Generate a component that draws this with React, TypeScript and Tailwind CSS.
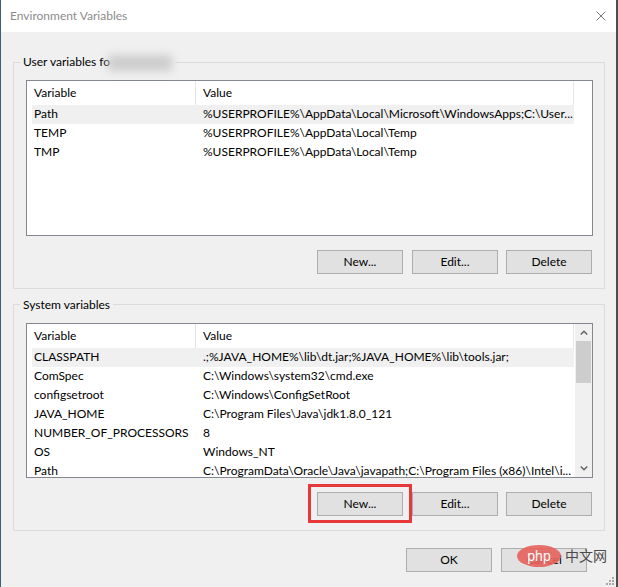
import React from "react";

type Row = [string, string];

const userVars: Row[] = [
  ["Path", "%USERPROFILE%\\AppData\\Local\\Microsoft\\WindowsApps;C:\\User..."],
  ["TEMP", "%USERPROFILE%\\AppData\\Local\\Temp"],
  ["TMP", "%USERPROFILE%\\AppData\\Local\\Temp"],
];

const systemVars: Row[] = [
  ["CLASSPATH", ".;%JAVA_HOME%\\lib\\dt.jar;%JAVA_HOME%\\lib\\tools.jar;"],
  ["ComSpec", "C:\\Windows\\system32\\cmd.exe"],
  ["configsetroot", "C:\\Windows\\ConfigSetRoot"],
  ["JAVA_HOME", "C:\\Program Files\\Java\\jdk1.8.0_121"],
  ["NUMBER_OF_PROCESSORS", "8"],
  ["OS", "Windows_NT"],
  ["Path", "C:\\ProgramData\\Oracle\\Java\\javapath;C:\\Program Files (x86)\\Intel\\i..."],
];

const Button: React.FC<{ label: string; className?: string }> = ({ label, className = "" }) => (
  <button
    className={`flex h-[24px] w-[86px] items-center justify-center border border-[#adadad] bg-[#e1e1e1] text-black ${className}`}
  >
    {label}
  </button>
);

const Chevron: React.FC<{ down?: boolean }> = ({ down }) => (
  <svg width="8" height="5" viewBox="0 0 8 5" className={down ? "rotate-180" : ""}>
    <path d="M0.8 4.4 L4 1.2 L7.2 4.4" fill="none" stroke="#606060" strokeWidth="1.4" />
  </svg>
);

const Scrollbar: React.FC = () => (
  <div className="flex h-full w-[17px] flex-col bg-[#f0f0f0]">
    <div className="flex h-[17px] items-center justify-center">
      <Chevron />
    </div>
    <div className="mx-px h-[42px] bg-[#cdcdcd]" />
    <div className="flex-1" />
    <div className="flex h-[17px] items-center justify-center">
      <Chevron down />
    </div>
  </div>
);

const VarList: React.FC<{ rows: Row[]; className: string; scroll?: boolean }> = ({
  rows,
  className,
  scroll,
}) => (
  <div className={`flex overflow-hidden border border-[#828790] bg-white ${className}`}>
    <div className="flex min-w-0 flex-1 flex-col">
      {/* column header */}
      <div className="flex h-[24px] w-[547px] shrink-0">
        <div className="flex w-[169px] items-center border-r border-[#e5e5e5] pl-[7px]">Variable</div>
        <div className="flex flex-1 items-center border-r border-[#e5e5e5] pl-[7px]">Value</div>
      </div>
      {rows.map(([name, value], i) => (
        <div
          key={name + i}
          className={`mr-px ml-[5px] flex h-[19px] shrink-0 items-center ${i === 0 ? "bg-[#f0f0f0]" : ""}`}
        >
          <div className="w-[164px] shrink-0 overflow-hidden pl-[2px] whitespace-nowrap">{name}</div>
          <div className="overflow-hidden pl-[7px] whitespace-nowrap">{value}</div>
        </div>
      ))}
    </div>
    <div className="w-[17px] shrink-0">{scroll && <Scrollbar />}</div>
  </div>
);

export default function App() {
  return (
    <div className="relative h-[587px] w-[618px] overflow-hidden border-r-2 border-l border-r-[#4d4d4d] border-l-[#3b5f7d] bg-[#f0f0f0] font-['Segoe_UI',Lato,sans-serif] text-[12px] leading-[16px] text-black">
      {/* Title bar */}
      <div className="flex h-[32px] items-center justify-between bg-white pr-[10px] pl-[9px]">
        <span className="text-[#8c8c8c]">Environment Variables</span>
        <svg width="10" height="10" viewBox="0 0 10 10">
          <path d="M0.5 0.5 L9.5 9.5 M9.5 0.5 L0.5 9.5" stroke="#7a7a7a" strokeWidth="1" />
        </svg>
      </div>

      {/* User variables */}
      <fieldset className="mt-[22px] ml-[12px] w-[592px] min-w-0 border border-[#dcdcdc]">
        <legend className="ml-[6px] px-[3px] leading-[16px]">
          User variables fo
          <span className="ml-[-2px] inline-block h-[16px] w-[64px] bg-[#cdcdcd] align-middle blur-[4px]" />
        </legend>
        <div className="pt-[9px] pr-[11px] pb-[14px] pl-[12px]">
          <VarList rows={userVars} className="h-[156px]" />
          <div className="mt-[14px] flex justify-end pr-px">
            <Button label="New..." />
            <Button label="Edit..." className="ml-[9px]" />
            <Button label="Delete" className="ml-[8px]" />
          </div>
        </div>
      </fieldset>

      {/* System variables */}
      <fieldset className="mt-[8px] ml-[12px] w-[592px] min-w-0 border border-[#dcdcdc]">
        <legend className="ml-[6px] px-[3px] leading-[16px]">System variables</legend>
        <div className="pt-[10px] pr-[11px] pb-[14px] pl-[12px]">
          <VarList rows={systemVars} className="h-[155px]" scroll />
          <div className="mt-[14px] flex justify-end pr-px">
            <div className="relative">
              <Button label="New..." />
              <span className="pointer-events-none absolute -top-[8px] -right-[9px] -bottom-[7px] -left-[9px] border-[3px] border-[#e8393a]" />
            </div>
            <Button label="Edit..." className="ml-[9px]" />
            <Button label="Delete" className="ml-[8px]" />
          </div>
        </div>
      </fieldset>

      {/* Dialog buttons */}
      <div className="mt-[17px] flex justify-end pr-[29px]">
        <Button label="OK" className="h-[23px]" />
        <Button label="Cancel" className="ml-[9px] h-[23px]" />
      </div>

      {/* watermark */}
      <div className="absolute top-[545px] left-[516px] flex h-[22px] w-[44px] items-center justify-center rounded-[50%] bg-[#e7625b]/90 font-['Liberation_Sans',sans-serif] text-[14px] text-white">
        php
      </div>
      <div className="absolute top-[545px] left-[564px] font-['Noto_Sans_CJK_SC',sans-serif] text-[14px] leading-[20px] text-[#4a4a4a]">
        中文网
      </div>

      {/* resize grip */}
      <svg className="absolute right-[2px] bottom-[2px]" width="10" height="10" viewBox="0 0 10 10">
        <g fill="#a8a8a8">
          <rect x="8" y="2" width="2" height="2" />
          <rect x="5" y="5" width="2" height="2" />
          <rect x="8" y="5" width="2" height="2" />
          <rect x="2" y="8" width="2" height="2" />
          <rect x="5" y="8" width="2" height="2" />
          <rect x="8" y="8" width="2" height="2" />
        </g>
      </svg>
    </div>
  );
}
